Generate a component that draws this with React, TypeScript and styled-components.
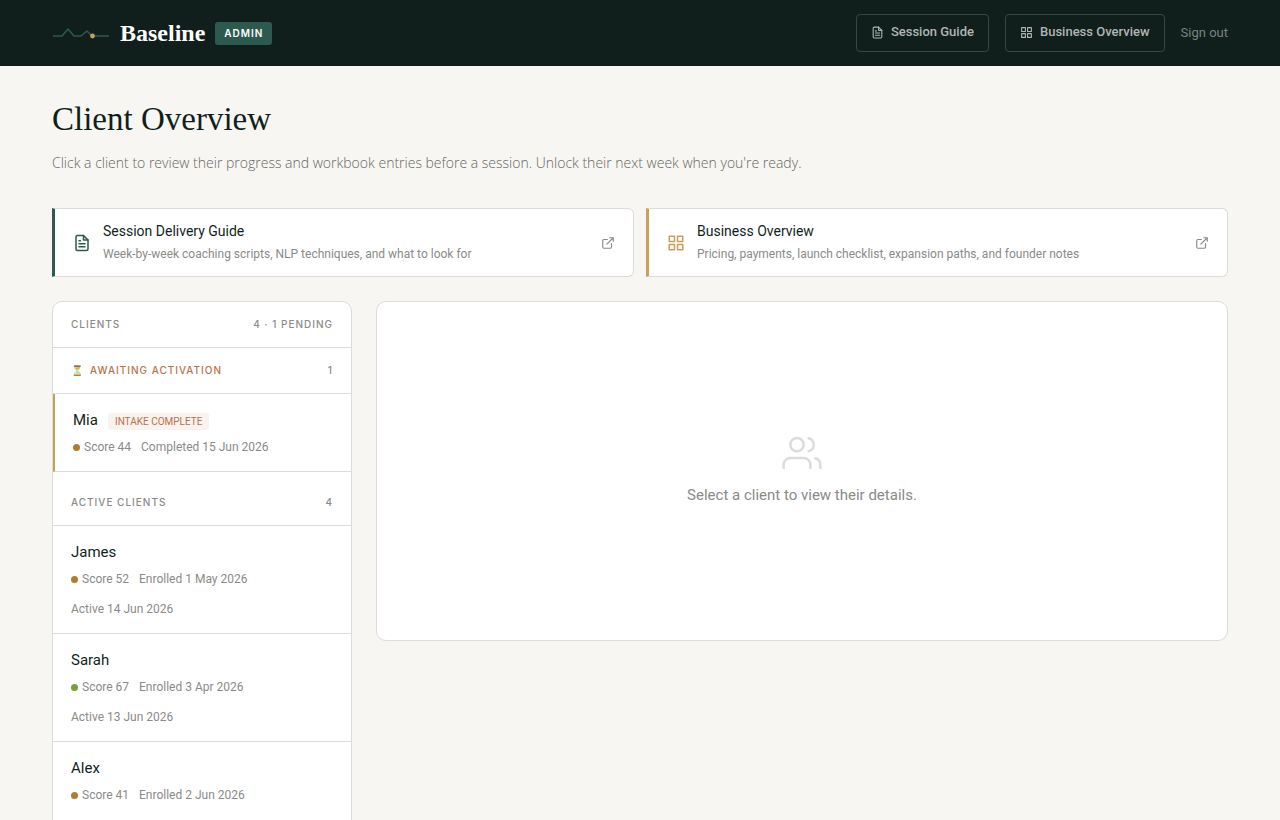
import React, { useState, type ReactNode } from 'react';
import styled, { createGlobalStyle } from 'styled-components';

const c = {
  ink: '#111f1c',
  green: '#2d5a4e',
  gold: '#c9a05a',
  rust: '#b87348',
  muted: '#8a8b88',
  line: '#dedcd6',
  page: '#f8f6f2',
};

const GlobalStyle = createGlobalStyle`
  * { box-sizing: border-box; }
  body {
    margin: 0;
    background: ${c.page};
    color: ${c.ink};
    font-family: Roboto, "Liberation Sans", sans-serif;
    font-size: 14px;
  }
  h1, h2, p, ul { margin: 0; padding: 0; }
  ul { list-style: none; }
  a { color: inherit; text-decoration: none; }
  button { font: inherit; color: inherit; cursor: pointer; }
`;

const TopBar = styled.header`
  display: flex;
  align-items: center;
  justify-content: space-between;
  padding: 14px 52px;
  background: ${c.ink};
`;

const Brand = styled.a`
  display: flex;
  align-items: center;
  gap: 10px;
`;

const BrandName = styled.span`
  color: #fff;
  font: 700 24px/32px "Liberation Serif", serif;
`;

const AdminBadge = styled.span`
  padding: 0 9px;
  border-radius: 3px;
  background: ${c.green};
  color: #fff;
  font-family: Inter, sans-serif;
  font-size: 10px;
  font-weight: 600;
  line-height: 23px;
  letter-spacing: 1px;
`;

const TopNav = styled.nav`
  display: flex;
  align-items: center;
  gap: 16px;
`;

const NavButton = styled.a`
  display: flex;
  align-items: center;
  gap: 7px;
  padding: 8px 14px 10px;
  border: 1px solid #394643;
  border-radius: 4px;
  color: #b0b5b3;
  font-size: 13px;
  font-weight: 500;
  line-height: 18px;
`;

const SignOut = styled.button`
  padding: 0;
  border: 0;
  background: none;
  color: #7b8381;
  font-size: 13px;
  line-height: 18px;
`;

const Page = styled.main`
  padding: 32px 52px 48px;
`;

const Title = styled.h1`
  font: 400 33px/42px "Liberation Serif", serif;
`;

const Lede = styled.p`
  margin: 12px 0 34px;
  color: #646663;
  font-family: "Open Sans", sans-serif;
  font-size: 14px;
  font-weight: 300;
  line-height: 22px;
`;

const Guides = styled.div`
  display: grid;
  grid-template-columns: 1fr 1fr;
  gap: 12px;
  margin-bottom: 24px;
`;

const GuideCard = styled.a<{ $accent: string }>`
  display: flex;
  align-items: center;
  gap: 12px;
  padding: 12px 18px;
  border: 1px solid ${c.line};
  border-left: 3px solid ${(p) => p.$accent};
  border-radius: 0 6px 6px 0;
  background: #fff;
  color: ${(p) => p.$accent};
`;

const GuideText = styled.span`
  flex: 1;
  display: grid;
  gap: 3px;
`;

const GuideTitle = styled.span`
  color: ${c.ink};
  font-size: 14px;
  line-height: 20px;
`;

const GuideNote = styled.span`
  color: ${c.muted};
  font-size: 12px;
  line-height: 20px;
`;

const OpenMark = styled.span`
  display: flex;
  color: ${c.muted};
`;

const Columns = styled.div`
  display: grid;
  grid-template-columns: 300px 1fr;
  align-items: start;
  gap: 24px;
`;

const Panel = styled.section`
  border: 1px solid ${c.line};
  border-radius: 10px;
  background: #fff;
  overflow: hidden;
`;

const ListHead = styled.div<{ $spaced?: boolean; $alert?: boolean }>`
  display: flex;
  justify-content: space-between;
  padding: ${(p) => (p.$spaced ? 22 : 14)}px 18px 14px;
  border-bottom: 1px solid ${c.line};
  color: ${c.muted};
  font-family: Inter, sans-serif;
  font-size: 10px;
  font-weight: 500;
  line-height: 17px;
  letter-spacing: 1px;
  text-transform: uppercase;

  h2 {
    display: flex;
    gap: 6px;
    font: inherit;
    color: ${(p) => (p.$alert ? c.rust : 'inherit')};
  }
`;

const ClientRow = styled.button<{ $pending?: boolean }>`
  display: grid;
  align-content: start;
  gap: 5px;
  width: 100%;
  min-height: ${(p) => (p.$pending ? 78 : 108)}px;
  padding: 14px 18px;
  border: 0;
  border-bottom: 1px solid ${c.line};
  border-left: ${(p) => (p.$pending ? `2px solid ${c.gold}` : '0')};
  background: #fff;
  text-align: left;
`;

const NameLine = styled.span`
  display: flex;
  align-items: center;
  gap: 10px;
  font-size: 15px;
  line-height: 24px;
`;

const Tag = styled.span`
  margin-top: 2px;
  padding: 0 7px;
  border-radius: 3px;
  background: #f9f2ee;
  color: ${c.rust};
  font-size: 10px;
  line-height: 17px;
  text-transform: uppercase;
`;

const Meta = styled.span`
  display: flex;
  flex-wrap: wrap;
  gap: 10px;
  color: ${c.muted};
  font-size: 12px;
  line-height: 20px;
`;

const Score = styled.span`
  display: flex;
  align-items: center;
  gap: 4px;
`;

const Dot = styled.span<{ $good?: boolean }>`
  width: 7px;
  height: 7px;
  border-radius: 50%;
  background: ${(p) => (p.$good ? '#7a9e3f' : '#b07d2e')};
`;

const FullLine = styled.span`
  flex-basis: 100%;
`;

const EmptyPanel = styled(Panel)`
  display: flex;
  flex-direction: column;
  align-items: center;
  justify-content: center;
  gap: 10px;
  min-height: 340px;
  padding-bottom: 2px;
  color: ${c.muted};
  font-size: 15px;
  line-height: 24px;

  svg { color: #dcdcdc; }
`;

function Icon({ size, children, width = 2 }: { size: number; width?: number; children: ReactNode }) {
  return (
    <svg width={size} height={size} viewBox="0 0 24 24" fill="none" stroke="currentColor"
      strokeWidth={width} strokeLinecap="round" strokeLinejoin="round" aria-hidden="true">
      {children}
    </svg>
  );
}

const DocIcon = ({ size }: { size: number }) => (
  <Icon size={size}>
    <path d="M14 2H6a2 2 0 0 0-2 2v16a2 2 0 0 0 2 2h12a2 2 0 0 0 2-2V8z" />
    <path d="M14 2v6h6M16 13H8M16 17H8M10 9H8" />
  </Icon>
);

const GridIcon = ({ size }: { size: number }) => (
  <Icon size={size}>
    <path d="M3 3h7v7H3zM14 3h7v7h-7zM14 14h7v7h-7zM3 14h7v7H3z" />
  </Icon>
);

const OpenIcon = () => (
  <Icon size={14}>
    <path d="M18 13v6a2 2 0 0 1-2 2H5a2 2 0 0 1-2-2V8a2 2 0 0 1 2-2h6M15 3h6v6M10 14 21 3" />
  </Icon>
);

const PeopleIcon = () => (
  <Icon size={40} width={1.5}>
    <path d="M17 21v-2a4 4 0 0 0-4-4H5a4 4 0 0 0-4 4v2" />
    <circle cx="9" cy="7" r="4" />
    <path d="M23 21v-2a4 4 0 0 0-3-3.87M16 3.13a4 4 0 0 1 0 7.75" />
  </Icon>
);

const Pulse = () => (
  <svg width="58" height="16" viewBox="0 0 58 16" fill="none" aria-hidden="true">
    <path d="M1 11h9l6-7 6 7h7l6-5 5 5h17" stroke={c.green} strokeWidth="1.5" strokeLinejoin="round" />
    <circle cx="40.5" cy="11" r="2.4" fill={c.gold} />
  </svg>
);

type Client = { name: string; score: number; date: string; active?: string; good?: boolean; pending?: boolean };

const pending: Client[] = [{ name: 'Mia', score: 44, date: 'Completed 15 Jun 2026', pending: true }];
const active: Client[] = [
  { name: 'James', score: 52, date: 'Enrolled 1 May 2026', active: 'Active 14 Jun 2026' },
  { name: 'Sarah', score: 67, date: 'Enrolled 3 Apr 2026', active: 'Active 13 Jun 2026', good: true },
  { name: 'Alex', score: 41, date: 'Enrolled 2 Jun 2026' },
];

function ClientItem({ client, onSelect }: { client: Client; onSelect: (name: string) => void }) {
  return (
    <li>
      <ClientRow type="button" $pending={client.pending} onClick={() => onSelect(client.name)}>
        <NameLine>
          {client.name}
          {client.pending && <Tag>Intake complete</Tag>}
        </NameLine>
        <Meta>
          <Score><Dot $good={client.good} />Score {client.score}</Score>
          <span>{client.date}</span>
          {client.active && <FullLine>{client.active}</FullLine>}
        </Meta>
      </ClientRow>
    </li>
  );
}

export default function App() {
  const [selected, setSelected] = useState<string | null>(null);
  return (
    <>
      <GlobalStyle />
      <TopBar>
        <Brand href="#">
          <Pulse />
          <BrandName>Baseline</BrandName>
          <AdminBadge>ADMIN</AdminBadge>
        </Brand>
        <TopNav>
          <NavButton href="#guide"><DocIcon size={13} />Session Guide</NavButton>
          <NavButton href="#business"><GridIcon size={13} />Business Overview</NavButton>
          <SignOut type="button">Sign out</SignOut>
        </TopNav>
      </TopBar>
      <Page>
        <Title>Client Overview</Title>
        <Lede>
          Click a client to review their progress and workbook entries before a session. Unlock their next week when you're ready.
        </Lede>
        <Guides>
          <GuideCard href="#guide" $accent={c.green}>
            <DocIcon size={18} />
            <GuideText>
              <GuideTitle>Session Delivery Guide</GuideTitle>
              <GuideNote>Week-by-week coaching scripts, NLP techniques, and what to look for</GuideNote>
            </GuideText>
            <OpenMark><OpenIcon /></OpenMark>
          </GuideCard>
          <GuideCard href="#business" $accent={c.gold}>
            <GridIcon size={18} />
            <GuideText>
              <GuideTitle>Business Overview</GuideTitle>
              <GuideNote>Pricing, payments, launch checklist, expansion paths, and founder notes</GuideNote>
            </GuideText>
            <OpenMark><OpenIcon /></OpenMark>
          </GuideCard>
        </Guides>
        <Columns>
          <Panel>
            <ListHead><h2>Clients</h2><span>4 · 1 pending</span></ListHead>
            <ListHead $alert><h2><span>⏳</span>Awaiting activation</h2><span>1</span></ListHead>
            <ul>{pending.map((p) => <ClientItem key={p.name} client={p} onSelect={setSelected} />)}</ul>
            <ListHead $spaced><h2>Active clients</h2><span>4</span></ListHead>
            <ul>{active.map((p) => <ClientItem key={p.name} client={p} onSelect={setSelected} />)}</ul>
          </Panel>
          <EmptyPanel>
            <PeopleIcon />
            <p>{selected ?? 'Select a client to view their details.'}</p>
          </EmptyPanel>
        </Columns>
      </Page>
    </>
  );
}
